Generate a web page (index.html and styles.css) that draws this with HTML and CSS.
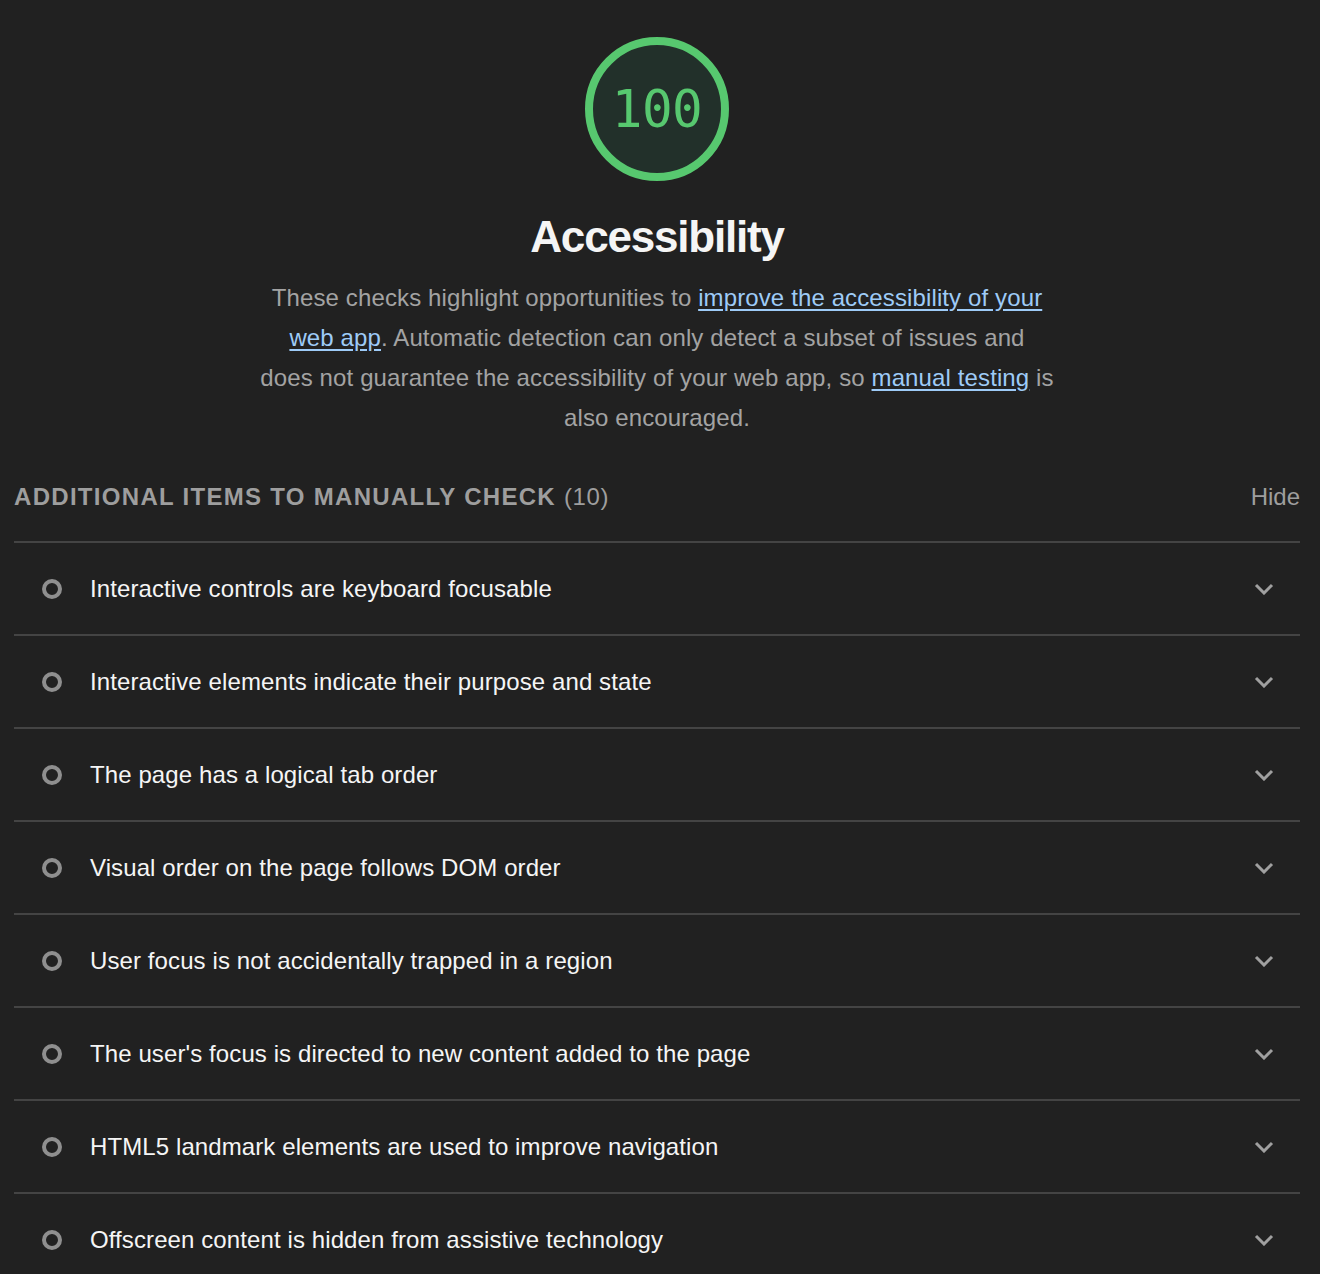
FILE: index.html
```html
<!DOCTYPE html>
<html lang="en">
<head>
<meta charset="utf-8">
<title>Accessibility</title>
<link rel="stylesheet" href="styles.css">
</head>
<body>
<div class="report">
  <header class="cat-header">
    <div class="gauge">
      <svg class="gauge-svg" viewBox="0 0 144 144" width="144" height="144">
        <circle cx="72" cy="72" r="68" fill="#22302a" stroke="#57c86f" stroke-width="8"/>
      </svg>
      <span class="gauge-score">100</span>
    </div>
    <h1 class="cat-title">Accessibility</h1>
    <p class="cat-desc">These checks highlight opportunities to <a href="#">improve the accessibility of your<br>web app</a>. Automatic detection can only detect a subset of issues and<br>does not guarantee the accessibility of your web app, so <a href="#">manual testing</a> is<br>also encouraged.</p>
  </header>

  <section class="group">
    <div class="group-head">
      <span class="group-title">Additional items to manually check <span class="count">(10)</span></span>
      <span class="hide">Hide</span>
    </div>
    <ul class="audits">
      <li class="audit"><span class="dot"></span><span class="audit-title">Interactive controls are keyboard focusable</span><svg class="chev" viewBox="0 0 20 12" width="20" height="12"><path d="M2 2 L10 10 L18 2" fill="none" stroke="#a0a0a0" stroke-width="3"/></svg></li>
      <li class="audit"><span class="dot"></span><span class="audit-title">Interactive elements indicate their purpose and state</span><svg class="chev" viewBox="0 0 20 12" width="20" height="12"><path d="M2 2 L10 10 L18 2" fill="none" stroke="#a0a0a0" stroke-width="3"/></svg></li>
      <li class="audit"><span class="dot"></span><span class="audit-title">The page has a logical tab order</span><svg class="chev" viewBox="0 0 20 12" width="20" height="12"><path d="M2 2 L10 10 L18 2" fill="none" stroke="#a0a0a0" stroke-width="3"/></svg></li>
      <li class="audit"><span class="dot"></span><span class="audit-title">Visual order on the page follows DOM order</span><svg class="chev" viewBox="0 0 20 12" width="20" height="12"><path d="M2 2 L10 10 L18 2" fill="none" stroke="#a0a0a0" stroke-width="3"/></svg></li>
      <li class="audit"><span class="dot"></span><span class="audit-title">User focus is not accidentally trapped in a region</span><svg class="chev" viewBox="0 0 20 12" width="20" height="12"><path d="M2 2 L10 10 L18 2" fill="none" stroke="#a0a0a0" stroke-width="3"/></svg></li>
      <li class="audit"><span class="dot"></span><span class="audit-title">The user's focus is directed to new content added to the page</span><svg class="chev" viewBox="0 0 20 12" width="20" height="12"><path d="M2 2 L10 10 L18 2" fill="none" stroke="#a0a0a0" stroke-width="3"/></svg></li>
      <li class="audit"><span class="dot"></span><span class="audit-title">HTML5 landmark elements are used to improve navigation</span><svg class="chev" viewBox="0 0 20 12" width="20" height="12"><path d="M2 2 L10 10 L18 2" fill="none" stroke="#a0a0a0" stroke-width="3"/></svg></li>
      <li class="audit"><span class="dot"></span><span class="audit-title">Offscreen content is hidden from assistive technology</span><svg class="chev" viewBox="0 0 20 12" width="20" height="12"><path d="M2 2 L10 10 L18 2" fill="none" stroke="#a0a0a0" stroke-width="3"/></svg></li>
    </ul>
  </section>
</div>
</body>
</html>
```

FILE: styles.css
```css
html, body {
  margin: 0;
  padding: 0;
  background: #212121;
}
body {
  font-family: "Liberation Sans", Arial, sans-serif;
  color: #f5f5f5;
  height: 1274px;
  overflow: hidden;
}
.report {
  padding: 37px 20px 0 14px;
}
.cat-header {
  display: flex;
  flex-direction: column;
  align-items: center;
}
.gauge {
  position: relative;
  width: 144px;
  height: 144px;
}
.gauge-svg {
  display: block;
}
.gauge-score {
  position: absolute;
  inset: 0;
  display: flex;
  align-items: center;
  justify-content: center;
  font-family: "DejaVu Sans Mono", "Liberation Mono", monospace;
  font-size: 51px;
  color: #57c86f;
  letter-spacing: -0.5px;
}
.cat-title {
  margin: 30px 0 0;
  font-size: 44px;
  line-height: 52px;
  font-weight: bold;
  letter-spacing: -1.2px;
  color: #f5f5f5;
}
.cat-desc {
  margin: 15px 0 0;
  max-width: 900px;
  text-align: center;
  font-size: 24px;
  line-height: 40px;
  color: #a3a3a3;
  letter-spacing: 0.12px;
}
.cat-desc a {
  color: #9ecbf7;
  text-decoration: underline;
  text-underline-offset: 3px;
}
.group {
  margin-top: 39px;
}
.group-head {
  display: flex;
  justify-content: space-between;
  align-items: center;
  height: 40px;
  padding-bottom: 24px;
  border-bottom: 2px solid #444;
}
.group-title {
  font-size: 24px;
  font-weight: bold;
  text-transform: uppercase;
  letter-spacing: 1.3px;
  color: #9e9e9e;
}
.count {
  font-weight: normal;
  letter-spacing: 0.6px;
}
.hide {
  font-size: 24px;
  color: #9e9e9e;
}
.audits {
  list-style: none;
  margin: 0;
  padding: 0;
}
.audit {
  display: flex;
  align-items: center;
  height: 91px;
  border-bottom: 2px solid #444;
}
.dot {
  flex: none;
  width: 12px;
  height: 12px;
  border: 4px solid #8f8f8f;
  border-radius: 50%;
  margin-left: 28px;
  margin-right: 28px;
}
.audit-title {
  flex: 1;
  font-size: 24px;
  color: #f5f5f5;
  letter-spacing: 0.1px;
}
.chev {
  flex: none;
  margin-right: 26px;
}
```
